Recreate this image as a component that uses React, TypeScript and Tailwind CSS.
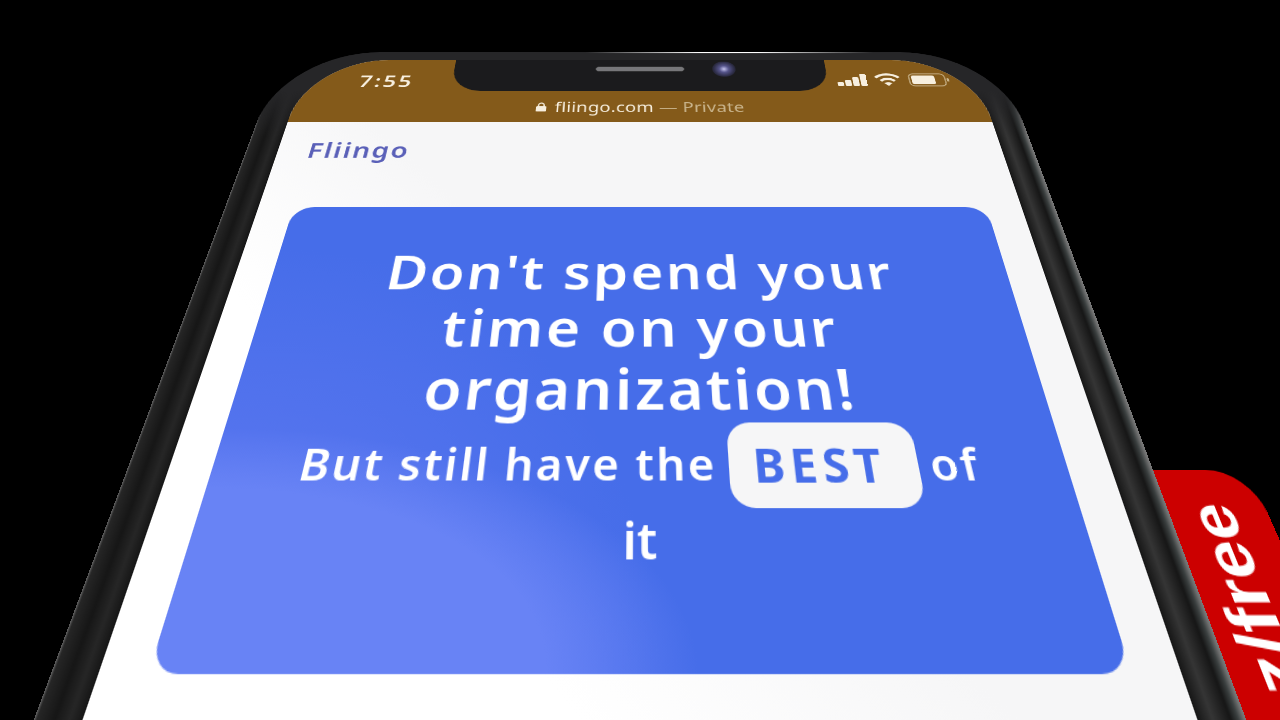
const font = "font-['Noto_Sans','Liberation_Sans',sans-serif]";

function SignalIcon() {
  return (
    <svg width="38" height="22" viewBox="0 0 38 22" fill="#f7efdf">
      <rect x="0" y="15" width="8" height="7" rx="1.5" />
      <rect x="10" y="11" width="8" height="11" rx="1.5" />
      <rect x="20" y="6" width="8" height="16" rx="1.5" />
      <rect x="30" y="0" width="8" height="22" rx="1.5" />
    </svg>
  );
}

function WifiIcon() {
  return (
    <svg width="34" height="24" viewBox="0 0 34 24" fill="none" stroke="#f7efdf" strokeWidth="4">
      <path d="M2 8 C10 0 24 0 32 8" />
      <path d="M8 14 C13 9 21 9 26 14" />
      <path d="M17 23 L12 18 C15 15.5 19 15.5 22 18 Z" fill="#f7efdf" stroke="none" />
    </svg>
  );
}

function BatteryIcon() {
  return (
    <svg width="54" height="24" viewBox="0 0 54 24" fill="none">
      <rect x="1" y="1" width="46" height="22" rx="6" stroke="#c9b48c" strokeWidth="1.5" />
      <rect x="4" y="4" width="30" height="16" rx="3" fill="#f7efdf" />
      <rect x="49" y="9" width="3" height="6" rx="1.5" fill="#c9b48c" />
    </svg>
  );
}

function LockIcon() {
  return (
    <svg width="15" height="16" viewBox="0 0 15 16" fill="#f7efdf">
      <path d="M4 7 V5 a3.5 3.5 0 0 1 7 0 V7" fill="none" stroke="#f7efdf" strokeWidth="1.8" />
      <rect x="1" y="7" width="13" height="9" rx="1.5" />
    </svg>
  );
}

function StatusBar() {
  return (
    <div className="bg-[#845a1a] h-[111px] flex flex-col">
      <div className="flex h-[57px]">
        <div className="w-[193px] flex">
          <span className="w-[218px] shrink-0 text-center text-[29px] font-semibold tracking-[3px] text-[#f7efdf] pt-[21px] leading-[36px]">
            7:55
          </span>
        </div>
        <div className="w-[482px] h-[57px] bg-[#1b1b1d] rounded-b-[38px] flex items-start justify-center pt-[12px]">
          <div className="w-[116px] h-[10px] rounded-full bg-[#77777a] border border-[#333]" />
          <div className="relative">
            <div className="absolute left-[36px] top-[-9px] w-[30px] h-[28px] rounded-full bg-[radial-gradient(circle,#c5c4ee_0,#55548a_30%,#2c2c44_65%,#1b1b1d_100%)]" />
          </div>
        </div>
        <div className="w-[193px] flex items-center gap-[10px] pl-[12px] pt-[17px]">
          <SignalIcon />
          <WifiIcon />
          <BatteryIcon />
        </div>
      </div>
      <div className="flex-1 flex items-center justify-center gap-[9px] pt-[2px] text-[23px] tracking-[0.3px] text-[#f7efdf]">
        <LockIcon />
        <span>
          fliingo.com <span className="text-[#c9b48c]">— Private</span>
        </span>
      </div>
    </div>
  );
}

function HeroCard() {
  return (
    <div className="mx-[40px] h-[472px] rounded-[24px] pt-[53px] text-white text-center bg-[#466de9] bg-[radial-gradient(ellipse_56%_44%_at_0%_100%,#6883f5_0%,#6883f5_72%,#6883f500_100%),radial-gradient(ellipse_52%_88%_at_0%_100%,#6079f2_0%,#466de9_100%)]">
      <div className="text-[60px] leading-[68px] font-semibold tracking-[2.6px]">
        <div>Don't spend your</div>
        <div>time on your</div>
        <div>organization!</div>
      </div>
      <div className="mt-[9px] flex items-center justify-center h-[67px] text-[42px] font-semibold tracking-[2.2px]">
        <span className="-mt-[2px]">But still have the</span>
        <span className="mx-[11px] -my-[8px] w-[175px] h-[81px] rounded-[22px] bg-[#f6f6f7] text-[#466de9] text-[44px] font-bold tracking-[5px] flex items-center justify-center pr-[6px]">
          BEST
        </span>
        <span className="-mt-[2px]">of</span>
      </div>
      <div className="h-[67px] flex items-center justify-center text-[44px] font-semibold">it</div>
    </div>
  );
}

export default function App() {
  return (
    <div className={`w-[1280px] h-[720px] overflow-hidden bg-black [perspective:606px] ${font}`}>
      <div className="relative w-[944px] h-[900px] mx-auto mt-[-91px] [transform-origin:50%_451px] [transform:rotateX(25.6deg)]">
        {/* red tab sitting behind the phone */}
        <div className="absolute left-[880px] top-[563px] w-[152px] h-[330px] rounded-tr-[40px] bg-[#cc0000] flex justify-end">
          <div className="w-[112px] h-full flex items-center justify-center pl-[8px] font-['Liberation_Sans',sans-serif] font-bold text-white text-[58px]">
            <span className="h-full pb-[30px] text-right [writing-mode:vertical-rl] rotate-180">z/free</span>
          </div>
        </div>

        <div className="relative h-full rounded-t-[128px] px-[38px] pt-[15px] bg-[linear-gradient(180deg,#262628_0,#262628_70px,transparent_150px),linear-gradient(90deg,#6a6a6a_0,#262626_2px,#161616_16px,#262626_28px,#161616_38px,#161616_906px,#353535_918px,#161616_932px,#3a3f3f_938px,#777_943px)]">
          <div className="absolute top-0 left-[400px] w-[380px] h-[2px] bg-[linear-gradient(90deg,transparent,#fff_40%,#fff_60%,transparent)]" />
          <div className="h-full rounded-t-[105px] overflow-hidden bg-[linear-gradient(to_top_right,#ffffff_0%,#ffffff_30%,#f6f6f7_50%)]">
            <StatusBar />
            <div className="h-[132px] pl-[36px] pb-[40px] flex items-center text-[33px] font-semibold tracking-[2px] text-[#5a60b8]">
              Fliingo
            </div>
            <HeroCard />
          </div>
        </div>
      </div>
    </div>
  );
}
